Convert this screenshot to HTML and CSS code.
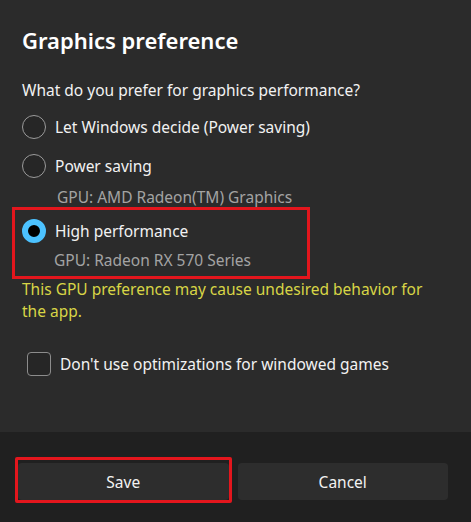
FILE: index.html
```html
<!DOCTYPE html>
<html lang="en">
<head>
<meta charset="utf-8">
<title>Graphics preference</title>
<link rel="stylesheet" href="styles.css">
</head>
<body>
<div class="dialog">
  <div class="content">
    <h1 class="title">Graphics preference</h1>
    <p class="question">What do you prefer for graphics performance?</p>
    <div class="option first">
      <div class="row"><span class="radio"></span><span class="label">Let Windows decide (Power saving)</span></div>
    </div>
    <div class="option second">
      <div class="row"><span class="radio"></span><span class="label">Power saving</span></div>
      <div class="sub">GPU: AMD Radeon(TM) Graphics</div>
    </div>
    <div class="option third highlight">
      <div class="row"><span class="radio checked"></span><span class="label">High performance</span></div>
      <div class="sub">GPU: Radeon RX 570 Series</div>
    </div>
    <p class="warning">This GPU preference may cause undesired behavior for the app.</p>
    <div class="check-row"><span class="checkbox"></span><span class="label">Don't use optimizations for windowed games</span></div>
  </div>
  <div class="footer">
    <button class="btn save">Save</button>
    <button class="btn">Cancel</button>
  </div>
</div>
</body>
</html>
```
FILE: styles.css
```css
html, body {
  margin: 0;
  padding: 0;
  background: #2b2b2b;
}
body {
  font-family: "Noto Sans", "Open Sans", sans-serif;
  color: #f2f2f2;
  width: 471px;
  height: 522px;
  overflow: hidden;
}
.dialog {
  display: flex;
  flex-direction: column;
  height: 522px;
}
.content {
  height: 432px;
  box-sizing: border-box;
  padding: 25px 0 0 22px;
  display: flex;
  flex-direction: column;
  align-items: flex-start;
}
.title {
  margin: 0;
  font-size: 22px;
  line-height: 30px;
  font-weight: 600;
  color: #ffffff;
}
.question {
  margin: 24px 0 0;
  font-size: 15.5px;
  line-height: 22px;
}
.option .row {
  display: flex;
  align-items: center;
  gap: 9px;
  height: 24px;
}
.label {
  font-size: 15.5px;
  line-height: 22px;
}
.option.first { margin-top: 14px; }
.option.second { margin-top: 15px; }
.option.second .sub { margin-top: 8px; padding-left: 35px; }
.sub {
  font-size: 15.5px;
  line-height: 22px;
  color: #a3a3a3;
  padding-left: 34px;
}
.radio {
  width: 24px;
  height: 24px;
  box-sizing: border-box;
  border-radius: 50%;
  border: 1.5px solid #9b9b9b;
  background: #262626;
  flex: none;
}
.radio.checked {
  border: 6px solid #4cc2ff;
  background: #000;
}
.highlight {
  margin-top: -1px;
  margin-left: -10px;
  width: 298px;
  box-sizing: border-box;
  border: 3px solid #e3161d;
  padding: 9px 0 5px 7px;
}
.highlight .sub {
  margin-top: 6px;
  padding-left: 32px;
}
.warning {
  margin: -1px 0 0;
  font-size: 15.5px;
  line-height: 22px;
  color: #d8d546;
  width: 410px;
}
.check-row {
  margin-top: 29px;
  margin-left: 5px;
  display: flex;
  align-items: center;
  gap: 9px;
  height: 25px;
}
.checkbox {
  width: 24px;
  height: 24px;
  box-sizing: border-box;
  border: 1.5px solid #8c8c8c;
  border-radius: 4px;
  background: #262626;
  flex: none;
}
.footer {
  flex: 1;
  background: #202020;
  display: flex;
  gap: 9px;
  padding: 31px 23px 0 18px;
  box-sizing: border-box;
  align-items: flex-start;
}
.btn {
  flex: 1;
  height: 37px;
  border: none;
  border-radius: 4px;
  background: #2d2d2d;
  color: #f2f2f2;
  font-family: "Noto Sans", "Open Sans", sans-serif;
  font-size: 15.5px;
  position: relative;
}
.save::after {
  content: "";
  position: absolute;
  top: -6px;
  bottom: -3px;
  left: -3px;
  right: -3px;
  border: 3px solid #e3161d;
  border-radius: 2px;
}
```
